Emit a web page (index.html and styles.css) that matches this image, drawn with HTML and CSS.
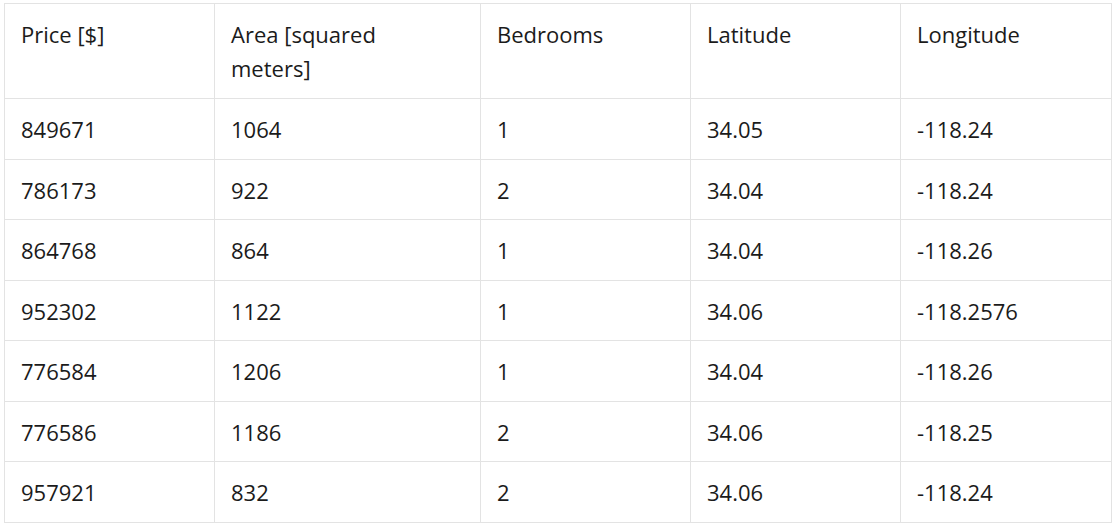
FILE: index.html
```html
<!DOCTYPE html>
<html>
<head>
<meta charset="utf-8">
<link rel="stylesheet" href="styles.css">
</head>
<body>
<table class="data">
  <colgroup>
    <col class="c1"><col class="c2"><col class="c3"><col class="c4"><col class="c5">
  </colgroup>
  <thead>
    <tr><th>Price [$]</th><th>Area [squared meters]</th><th>Bedrooms</th><th>Latitude</th><th>Longitude</th></tr>
  </thead>
  <tbody>
    <tr><td>849671</td><td>1064</td><td>1</td><td>34.05</td><td>-118.24</td></tr>
    <tr><td>786173</td><td>922</td><td>2</td><td>34.04</td><td>-118.24</td></tr>
    <tr><td>864768</td><td>864</td><td>1</td><td>34.04</td><td>-118.26</td></tr>
    <tr><td>952302</td><td>1122</td><td>1</td><td>34.06</td><td>-118.2576</td></tr>
    <tr><td>776584</td><td>1206</td><td>1</td><td>34.04</td><td>-118.26</td></tr>
    <tr><td>776586</td><td>1186</td><td>2</td><td>34.06</td><td>-118.25</td></tr>
    <tr><td>957921</td><td>832</td><td>2</td><td>34.06</td><td>-118.24</td></tr>
  </tbody>
</table>
</body>
</html>
```
FILE: styles.css
```css
html, body {
  margin: 0;
  padding: 0;
  background: #ffffff;
}
body {
  padding: 3px 0 0 4px;
  font-family: "Open Sans", "Noto Sans", sans-serif;
  color: #1b1b1b;
}
.data {
  border-collapse: collapse;
  table-layout: fixed;
  width: 1107px;
}
.c1 { width: 210px; }
.c2 { width: 266px; }
.c3 { width: 210px; }
.c4 { width: 210px; }
.c5 { width: 211px; }
.data th, .data td {
  border: 1px solid #e3e3e3;
  padding: 13px 16px 12px 16px;
  font-size: 22px;
  line-height: 34px;
  font-weight: 400;
  text-align: left;
  vertical-align: top;
}
.data th {
  padding-right: 24px;
  padding-bottom: 13px;
}
.data td {
  padding-top: 13px;
  padding-bottom: 12.5px;
}
```
